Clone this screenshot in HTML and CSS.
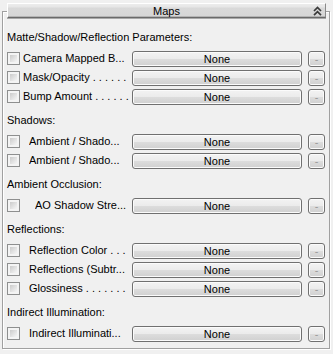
FILE: index.html
```html
<!DOCTYPE html>
<html>
<head>
<meta charset="utf-8">
<link rel="stylesheet" href="styles.css">
</head>
<body>
<div class="group">
  <div class="titlebar">
    <span class="title">Maps</span>
    <svg class="chev" width="9" height="10" viewBox="0 0 9 10"><path d="M1 5 L4.5 1.5 L8 5 M1 9.2 L4.5 5.7 L8 9.2" fill="none" stroke="#3a3a3a" stroke-width="1.7"/></svg>
  </div>
  <div class="sections">
    <section class="section">
      <div class="section-title">Matte/Shadow/Reflection Parameters:</div>
      <div class="row"><span class="cb"></span><span class="lbl">Camera Mapped B...</span><span class="btn">None</span><span class="sbtn">-</span></div>
      <div class="row"><span class="cb"></span><span class="lbl">Mask/Opacity . . . . . .</span><span class="btn">None</span><span class="sbtn">-</span></div>
      <div class="row"><span class="cb"></span><span class="lbl">Bump Amount . . . . . .</span><span class="btn">None</span><span class="sbtn">-</span></div>
    </section>
    <section class="section">
      <div class="section-title">Shadows:</div>
      <div class="row"><span class="cb"></span><span class="lbl indent">Ambient / Shado...</span><span class="btn">None</span><span class="sbtn">-</span></div>
      <div class="row"><span class="cb"></span><span class="lbl indent">Ambient / Shado...</span><span class="btn">None</span><span class="sbtn">-</span></div>
    </section>
    <section class="section">
      <div class="section-title">Ambient Occlusion:</div>
      <div class="row"><span class="cb"></span><span class="lbl indent2">AO Shadow Stre...</span><span class="btn">None</span><span class="sbtn">-</span></div>
    </section>
    <section class="section">
      <div class="section-title">Reflections:</div>
      <div class="row"><span class="cb"></span><span class="lbl indent">Reflection Color . . .</span><span class="btn">None</span><span class="sbtn">-</span></div>
      <div class="row"><span class="cb"></span><span class="lbl indent">Reflections (Subtr...</span><span class="btn">None</span><span class="sbtn">-</span></div>
      <div class="row"><span class="cb"></span><span class="lbl indent">Glossiness . . . . . . .</span><span class="btn">None</span><span class="sbtn">-</span></div>
    </section>
    <section class="section">
      <div class="section-title">Indirect Illumination:</div>
      <div class="row"><span class="cb"></span><span class="lbl indent">Indirect Illuminati...</span><span class="btn">None</span><span class="sbtn">-</span></div>
    </section>
  </div>
</div>
</body>
</html>
```

FILE: styles.css
```css
html, body {
  margin: 0;
  padding: 0;
  background: #f0f0f0;
}
body {
  font-family: "Liberation Sans", Arial, sans-serif;
  font-size: 11px;
  color: #000;
  width: 333px;
  height: 354px;
  overflow: hidden;
}
.group {
  box-sizing: border-box;
  margin: 11px 0 0 2px;
  width: 328px;
  border: 1px solid #a0a0a0;
  box-shadow: inset 1px 1px 0 #fff, 1px 1px 0 #fff;
  padding: 0 4px 5px 4px;
}
.titlebar {
  box-sizing: border-box;
  margin: -9px -1px 0 0;
  height: 15px;
  display: grid;
  grid-template-columns: 1fr auto 1fr;
  align-items: center;
  border-top: 1px solid #fff;
  border-left: 1px solid #fff;
  border-right: 1px solid #8a8a8a;
  border-bottom: 1px solid #6a6a6a;
  box-shadow: 0 1px 0 #a8a8a8, inset 0 -1px 0 #b4b4b4;
  background: linear-gradient(#ececec 0, #e6e6e6 3px, #d9d9d9 4px, #d6d6d6 100%);
}
.title {
  grid-column: 2;
  line-height: 12px;
  padding-top: 0;
}
.chev {
  grid-column: 3;
  justify-self: end;
  margin-right: 3px;
}
.sections {
  padding-top: 12px;
  display: flex;
  flex-direction: column;
  gap: 7px;
}
.section-title {
  height: 14px;
  line-height: 14px;
  margin-bottom: 5px;
  white-space: nowrap;
}
.row {
  height: 19px;
  display: flex;
  align-items: flex-start;
}
.cb {
  box-sizing: border-box;
  flex: none;
  width: 13px;
  height: 13px;
  margin-top: 3px;
  border: 1px solid #8e8f8f;
  padding: 2px;
  background: linear-gradient(135deg, #cbcbcb, #f6f6f6) content-box, #f4f4f4;
}
.lbl {
  flex: 1;
  min-width: 0;
  margin-left: 3px;
  line-height: 19px;
  white-space: nowrap;
  overflow: hidden;
}
.lbl.indent { margin-left: 9px; }
.lbl.indent2 { margin-left: 15px; }
.btn, .sbtn {
  box-sizing: border-box;
  flex: none;
  height: 16px;
  margin-top: 2px;
  border: 1px solid #707070;
  border-radius: 3px;
  background: linear-gradient(#f3f3f3 0, #ebebeb 50%, #dddddd 50%, #d0d0d0 100%);
  box-shadow: inset 0 0 0 1px #fbfbfb;
  text-align: center;
  line-height: 14px;
}
.btn {
  width: 170px;
}
.sbtn {
  width: 17px;
  margin-left: 6px;
  color: #9a9a9a;
}
```
